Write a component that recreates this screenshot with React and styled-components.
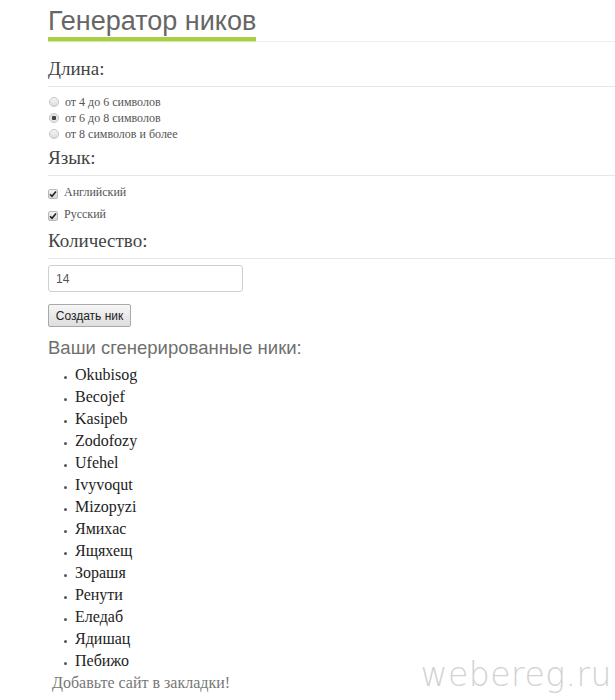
import React from 'react'
import styled, { createGlobalStyle } from 'styled-components'

const GlobalStyle = createGlobalStyle`
  html, body {
    margin: 0;
    padding: 0;
    background: #fff;
  }
  body {
    font-family: "Liberation Serif", "Times New Roman", serif;
  }
`

const nicks = [
  'Okubisog', 'Becojef', 'Kasipeb', 'Zodofozy', 'Ufehel', 'Ivyvoqut', 'Mizopyzi',
  'Ямихас', 'Ящяхещ', 'Зорашя', 'Ренути', 'Еледаб', 'Ядишац', 'Пебижо',
]

function App() {
  return (
    <Page>
      <GlobalStyle />
      <TitleBar>
        <Title>Генератор ников</Title>
      </TitleBar>

      <Label $first>Длина:</Label>
      <RadioGroup>
        <OptionRow><Radio /> от 4 до 6 символов</OptionRow>
        <OptionRow><Radio $checked /> от 6 до 8 символов</OptionRow>
        <OptionRow><Radio /> от 8 символов и более</OptionRow>
      </RadioGroup>

      <Label>Язык:</Label>
      <CheckGroup>
        <CheckRow><Check><CheckMark /></Check>Английский</CheckRow>
        <CheckRow><Check><CheckMark /></Check>Русский</CheckRow>
      </CheckGroup>

      <Label>Количество:</Label>
      <Input defaultValue="14" />
      <Button>Создать ник</Button>

      <SubTitle>Ваши сгенерированные ники:</SubTitle>
      <NickList>
        {nicks.map((n) => <Nick key={n}>{n}</Nick>)}
      </NickList>
      <Bookmark>Добавьте сайт в закладки!</Bookmark>

      <Watermark>webereg.ru</Watermark>
    </Page>
  )
}

function CheckMark() {
  return (
    <svg width="8" height="8" viewBox="0 0 8 8">
      <path d="M1 4.3 L3 6.3 L7 1.5" fill="none" stroke="#222" strokeWidth="1.6" />
    </svg>
  )
}

export default App

const Page = styled.div`
  position: relative;
  width: 615px;
  height: 700px;
  overflow: hidden;
  padding-left: 48px;
  box-sizing: border-box;
`

const TitleBar = styled.div`
  border-bottom: 1px solid #eeeeee;
  padding-top: 6px;
  height: 35px;
`

const Title = styled.h1`
  display: inline-block;
  margin: 0;
  font-family: "Liberation Sans", Arial, sans-serif;
  font-weight: normal;
  font-size: 27px;
  line-height: 30px;
  color: #666;
  padding-bottom: 1px;
  border-bottom: 4px solid #a8cf45;
  box-shadow: 0 1px 0 #d4e9a0;
`

const Label = styled.div`
  margin-top: ${(p) => (p.$first ? '15px' : '4px')};
  font-size: 19px;
  line-height: 24px;
  color: #444;
  padding-bottom: 5px;
  border-bottom: 1px solid #e6e6e6;
`

const RadioGroup = styled.div`
  margin-top: 7px;
  display: flex;
  flex-direction: column;
`

const OptionRow = styled.label`
  display: flex;
  align-items: center;
  gap: 6px;
  height: 16px;
  font-size: 12px;
  color: #555;
`

const Radio = styled.span`
  width: 10px;
  height: 10px;
  margin-left: 1px;
  border-radius: 50%;
  border: 1px solid #c4c4c4;
  box-sizing: border-box;
  background: ${(p) =>
    p.$checked
      ? 'radial-gradient(circle, #444 0 2px, #e6e6e6 2.5px)'
      : 'linear-gradient(#f4f4f4, #dcdcdc)'};
`

const CheckGroup = styled.div`
  margin-top: 5px;
  display: flex;
  flex-direction: column;
`

const CheckRow = styled.label`
  display: flex;
  align-items: center;
  gap: 6px;
  height: 22px;
  font-size: 12px;
  color: #555;
`

const Check = styled.span`
  width: 10px;
  height: 10px;
  margin-top: 3px;
  border: 1px solid #b8b8b8;
  border-radius: 2px;
  box-sizing: border-box;
  background: linear-gradient(#f2f2f2, #d8d8d8);
  display: flex;
  align-items: center;
  justify-content: center;
`

const Input = styled.input`
  display: block;
  margin-top: 6px;
  width: 195px;
  height: 27px;
  box-sizing: border-box;
  padding: 0 7px;
  border: 1px solid #cfcfcf;
  border-radius: 3px;
  font-family: "Liberation Sans", Arial, sans-serif;
  font-size: 12px;
  color: #555;
  outline: none;
`

const Button = styled.button`
  display: block;
  margin-top: 12px;
  width: 83px;
  height: 23px;
  padding: 0;
  border: 1px solid #a9a9a9;
  border-radius: 2px;
  background: linear-gradient(#f6f6f6, #dedede);
  font-family: "Liberation Sans", Arial, sans-serif;
  font-size: 12px;
  color: #222;
`

const SubTitle = styled.div`
  margin-top: 10px;
  font-family: "Liberation Sans", Arial, sans-serif;
  font-size: 18.5px;
  line-height: 22px;
  color: #6f6f6f;
`

const NickList = styled.ul`
  list-style: none;
  margin: 5px 0 0;
  padding: 0 0 0 16px;
`

const Nick = styled.li`
  position: relative;
  padding-left: 11px;
  font-size: 16px;
  line-height: 22px;
  color: #222;

  &::before {
    content: '';
    position: absolute;
    left: 0;
    top: 12px;
    width: 3px;
    height: 3px;
    border-radius: 50%;
    background: #555;
  }
`

const Bookmark = styled.div`
  margin-left: 4px;
  font-size: 16px;
  line-height: 22px;
  color: #777;
`

const Watermark = styled.div`
  position: absolute;
  right: 3px;
  bottom: 6px;
  font-family: "DejaVu Sans", sans-serif;
  font-weight: 200;
  font-size: 33px;
  letter-spacing: 0.5px;
  color: #d2d2d2;
`
